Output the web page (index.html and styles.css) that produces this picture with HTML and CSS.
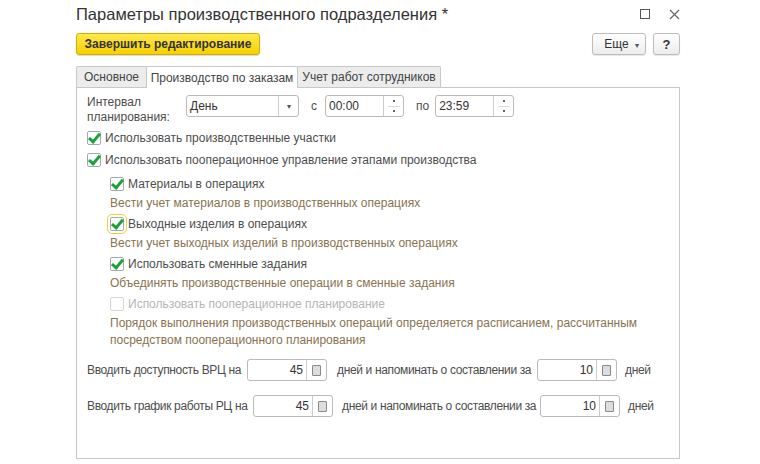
FILE: index.html
```html
<!DOCTYPE html>
<html lang="ru">
<head>
    <meta charset="UTF-8">
    <title>Параметры производственного подразделения</title>
    <link rel="stylesheet" href="styles.css">
</head>
<body>
<div class="window">
    <div class="titlebar">
        <h1>Параметры производственного подразделения *</h1>
        <div class="win-buttons">
            <span class="win-max"></span>
            <svg class="win-close" width="11" height="11" viewBox="0 0 11 11"><path d="M1 1L10 10M10 1L1 10" stroke="#666" stroke-width="1.2"/></svg>
        </div>
    </div>

    <div class="toolbar">
        <button class="btn-primary">Завершить редактирование</button>
        <div class="toolbar-right">
            <button class="btn">Еще <span class="caret">▾</span></button>
            <button class="btn btn-help">?</button>
        </div>
    </div>

    <div class="tabs">
        <div class="tab tab-main">Основное</div>
        <div class="tab tab-orders active">Производство по заказам</div>
        <div class="tab tab-staff">Учет работ сотрудников</div>
    </div>

    <div class="panel">
        <div class="interval-row">
            <div class="interval-label">Интервал<br>планирования:</div>
            <div class="field select">
                <span class="field-value">День</span>
                <span class="field-btn"><span class="caret-small">▾</span></span>
            </div>
            <span class="sep sep-from">с</span>
            <div class="field time">
                <span class="field-value">00:00</span>
                <span class="field-btn spin"><i></i><b></b><i></i></span>
            </div>
            <span class="sep sep-to">по</span>
            <div class="field time">
                <span class="field-value">23:59</span>
                <span class="field-btn spin"><i></i><b></b><i></i></span>
            </div>
        </div>

        <label class="check"><span class="box checked"></span>Использовать производственные участки</label>
        <label class="check"><span class="box checked"></span>Использовать пооперационное управление этапами производства</label>

        <div class="nested">
            <label class="check"><span class="box checked"></span>Материалы в операциях</label>
            <p class="hint">Вести учет материалов в производственных операциях</p>
            <label class="check"><span class="box checked focused"></span>Выходные изделия в операциях</label>
            <p class="hint">Вести учет выходных изделий в производственных операциях</p>
            <label class="check"><span class="box checked"></span>Использовать сменные задания</label>
            <p class="hint">Объединять производственные операции в сменные задания</p>
            <label class="check disabled"><span class="box"></span>Использовать пооперационное планирование</label>
            <p class="hint">Порядок выполнения производственных операций определяется расписанием, рассчитанным<br>посредством пооперационного планирования</p>
        </div>

        <div class="days-row first">
            <span class="days-label">Вводить доступность ВРЦ на</span>
            <div class="field num">
                <span class="field-value">45</span>
                <span class="field-btn"><span class="calc"></span></span>
            </div>
            <span class="days-text">дней и напоминать о составлении за</span>
            <div class="field num">
                <span class="field-value">10</span>
                <span class="field-btn"><span class="calc"></span></span>
            </div>
            <span class="days-end">дней</span>
        </div>
        <div class="days-row second">
            <span class="days-label">Вводить график работы РЦ на</span>
            <div class="field num">
                <span class="field-value">45</span>
                <span class="field-btn"><span class="calc"></span></span>
            </div>
            <span class="days-text">дней и напоминать о составлении за</span>
            <div class="field num">
                <span class="field-value">10</span>
                <span class="field-btn"><span class="calc"></span></span>
            </div>
            <span class="days-end">дней</span>
        </div>
    </div>
</div>
</body>
</html>
```

FILE: styles.css
```css
body {
    margin: 0;
    background: #fff;
    font-family: 'Liberation Sans', Arial, sans-serif;
    font-size: 12px;
    color: #4d4d4d;
    white-space: nowrap;
}
.window {
    width: 604px;
    margin-left: 76px;
}
.titlebar {
    display: flex;
    justify-content: space-between;
    align-items: center;
    height: 28px;
}
h1 {
    margin: 0;
    font-size: 16.5px;
    font-weight: normal;
    color: #333;
}
.win-buttons {
    display: flex;
    align-items: center;
    gap: 19px;
}
.win-max {
    width: 8px;
    height: 8px;
    border: 1px solid #555;
}
.toolbar {
    display: flex;
    justify-content: space-between;
    align-items: center;
    margin-top: 5px;
    height: 22px;
}
.toolbar-right {
    display: flex;
    gap: 7px;
}
button {
    font-family: inherit;
    cursor: pointer;
}
.btn-primary {
    width: 184px;
    height: 22px;
    background: linear-gradient(#ffe84a, #f6d100);
    border: 1px solid #d1ae00;
    border-radius: 3px;
    font-weight: bold;
    font-size: 12px;
    color: #333;
    padding: 0;
    box-shadow: 0 1px 1px rgba(0, 0, 0, 0.15);
}
.btn {
    height: 22px;
    background: linear-gradient(#fff, #ececec);
    border: 1px solid #bdbdbd;
    border-radius: 3px;
    font-size: 12px;
    color: #333;
    padding: 0 6px 0 11px;
    box-shadow: 0 1px 1px rgba(0, 0, 0, 0.1);
}
.btn .caret {
    font-size: 8px;
    color: #555;
    margin-left: 3px;
}
.btn-help {
    width: 27px;
    padding: 0;
    font-weight: bold;
    font-size: 13px;
}
.tabs {
    display: flex;
    margin-top: 11px;
    height: 21px;
}
.tab {
    display: flex;
    align-items: center;
    justify-content: center;
    box-sizing: border-box;
    border: 1px solid #c8c8c8;
    border-bottom: none;
    background: #ececec;
    color: #444;
    border-radius: 2px 2px 0 0;
    margin-right: -1px;
}
.tab-main {
    width: 71px;
}
.tab-orders {
    width: 152px;
}
.tab-staff {
    width: 144px;
}
.tab.active {
    background: #fff;
    position: relative;
    height: 22px;
    z-index: 1;
}
.panel {
    border: 1px solid #c8c8c8;
    height: 372px;
    padding: 7px 10px 0 10px;
    box-sizing: border-box;
}
.interval-row {
    display: flex;
    align-items: flex-start;
    height: 32px;
}
.interval-label {
    width: 99px;
    line-height: 15px;
}
.field {
    display: flex;
    height: 22px;
    border: 1px solid #bbb;
    border-radius: 3px;
    box-sizing: border-box;
    background: #fff;
    color: #333;
}
.field-value {
    flex: 1;
    display: flex;
    align-items: center;
    padding-left: 3px;
}
.field-btn {
    width: 19px;
    border-left: 1px solid #ccc;
    display: flex;
    align-items: center;
    justify-content: center;
}
.select {
    width: 113px;
}
.caret-small {
    font-size: 8px;
    color: #555;
}
.spin {
    flex-direction: column;
    justify-content: space-evenly;
}
.spin i {
    width: 2px;
    height: 2px;
    background: #666;
}
.spin b {
    width: 12px;
    height: 1px;
    background: #ddd;
}
.time {
    width: 79px;
}
.sep {
    margin-top: 4px;
}
.sep-from {
    margin-left: 12px;
    margin-right: 8px;
}
.sep-to {
    margin-left: 12px;
    margin-right: 6px;
}
.check {
    display: flex;
    align-items: center;
    height: 22px;
}
.box {
    position: relative;
    width: 12px;
    height: 12px;
    border: 1px solid #a8a8a8;
    border-radius: 2px;
    margin-right: 4px;
    background: #fff;
}
.box.checked::after {
    content: "";
    position: absolute;
    left: 3px;
    top: -1px;
    width: 4px;
    height: 9px;
    border: solid #18a33a;
    border-width: 0 3px 3px 0;
    transform: rotate(40deg);
}
.box.focused {
    outline: 1px solid #f2cd3a;
    outline-offset: 2px;
}
.check.disabled {
    color: #b5b5b5;
}
.check.disabled .box {
    border-color: #d5d5d5;
}
.nested {
    padding-left: 23px;
    margin-top: 2px;
}
.hint {
    margin: 0;
    color: #8a7250;
    line-height: 17px;
    min-height: 18px;
}
.days-row {
    display: flex;
    align-items: center;
    height: 22px;
    letter-spacing: -0.35px;
}
.days-row.first {
    margin-top: 10px;
}
.days-row.second {
    margin-top: 14px;
}
.num {
    width: 80px;
    letter-spacing: 0;
}
.num .field-value {
    justify-content: flex-end;
    padding-right: 3px;
}
.first .days-label {
    width: 160px;
}
.second .days-label {
    width: 166px;
}
.days-text {
    margin-left: 10px;
    width: 200px;
}
.second .days-text {
    margin-left: 9px;
    width: 198px;
}
.days-end {
    margin-left: 8px;
}
.calc {
    width: 7px;
    height: 9px;
    border: 1px solid #888;
    background: #ddd;
    border-radius: 1px;
}
```
